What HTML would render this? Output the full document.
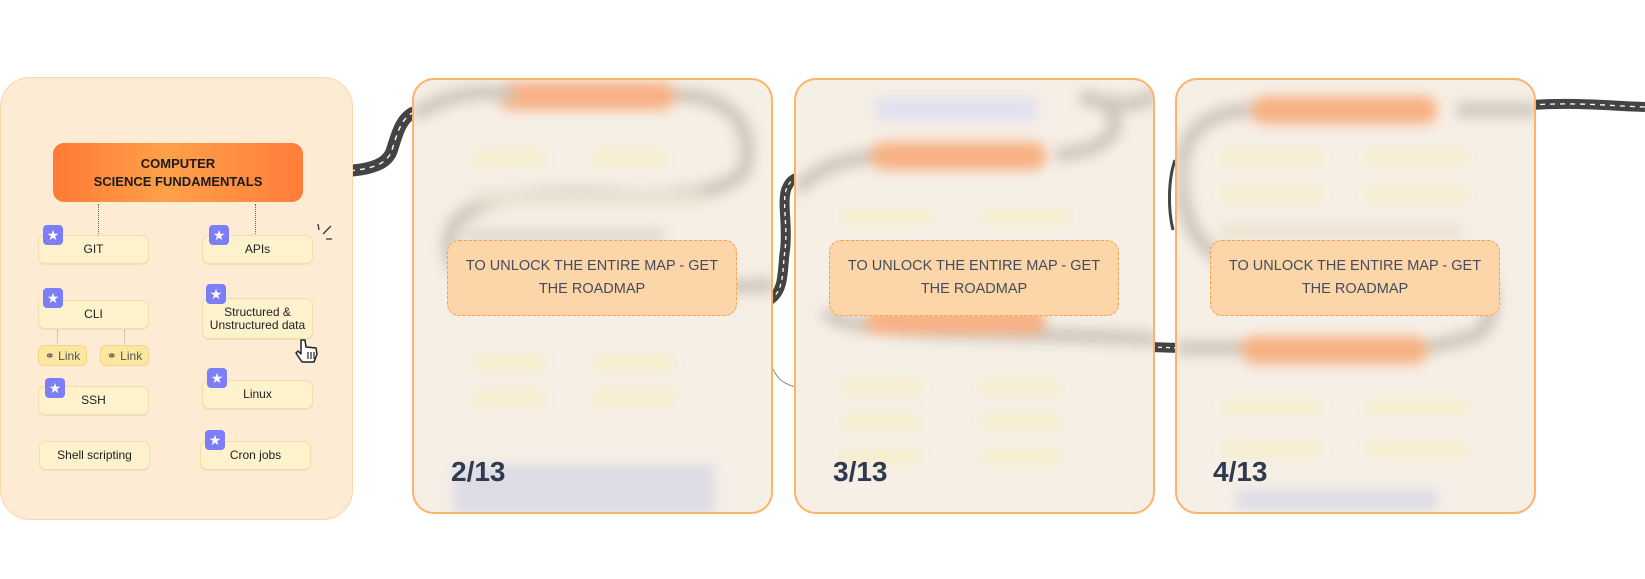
<!DOCTYPE html>
<html><head><meta charset="utf-8"><style>
*{margin:0;padding:0;box-sizing:border-box}
body{width:1645px;height:579px;background:#fff;position:relative;overflow:hidden;font-family:"Liberation Sans",sans-serif}
.abs{position:absolute}
.p1{left:0;top:77px;width:353px;height:443px;background:#fdebd4;border:1.5px solid #fbd6a8;border-radius:30px}
.main{left:53px;top:143px;width:250px;height:59px;border-radius:11px;background:linear-gradient(90deg,#ff7a35,#ffa04a 45%,#ff7d3a);display:flex;align-items:center;justify-content:center;text-align:center;font-weight:bold;font-size:13px;line-height:18px;color:#1b1b1b}
.n{background:#fef2cc;border:1px solid #f1deab;border-radius:7px;display:flex;align-items:center;justify-content:center;text-align:center;font-size:12px;color:#222;line-height:13px;box-shadow:0 1px 1px rgba(0,0,0,.06)}
.st{width:20px;height:20px;border-radius:4px;background:#7b7ef5;color:#fff;font-size:14px;line-height:20px;text-align:center}
.lk{background:#fde6a0;border:1px solid #f5d58a;border-radius:6px;font-size:12px;color:#555;display:flex;align-items:center;justify-content:center}
.dash{border-left:1.5px dotted #666;width:0}
.pn{width:361px;height:436px;top:78px;border:2px solid #fbb468;border-radius:22px;background:#f6efe6;overflow:hidden}
.blur{position:absolute;inset:0;filter:blur(6px)}
.cta{width:290px;height:76px;border:1.5px dashed #f7a052;border-radius:12px;background:#fcd5a8;display:flex;align-items:center;justify-content:center;text-align:center;font-size:14.5px;line-height:23px;color:#454c5c;padding:0 10px}
.num{font-size:28px;font-weight:bold;color:#2f3a4e}
</style></head><body>
<svg class="abs" style="left:0;top:0" width="1645" height="579">
<g fill="none" stroke-linecap="butt">
<path d="M300 172 C350 172 385 172 392 150 C398 130 402 118 414 112" stroke="#444" stroke-width="12"/>
<path d="M300 172 C350 172 385 172 392 150 C398 130 402 118 414 112" stroke="#fff" stroke-width="1.4" stroke-dasharray="5 5"/>
<path d="M770 300 C785 290 782 270 785 250 C788 225 782 205 786 190 C789 182 792 180 796 178" stroke="#444" stroke-width="10"/>
<path d="M770 300 C785 290 782 270 785 250 C788 225 782 205 786 190 C789 182 792 180 796 178" stroke="#fff" stroke-width="1.3" stroke-dasharray="4 4"/>
<path d="M1150 347 L1180 348" stroke="#444" stroke-width="10"/>
<path d="M1150 347 L1180 348" stroke="#fff" stroke-width="1.3" stroke-dasharray="4 4"/>
<path d="M1530 105 C1580 102 1610 106 1645 107" stroke="#444" stroke-width="10"/>
<path d="M1530 105 C1580 102 1610 106 1645 107" stroke="#fff" stroke-width="1.3" stroke-dasharray="5 5"/>
<path d="M1175 160 C1168 180 1168 210 1173 230" stroke="#444" stroke-width="3"/>
<path d="M770 360 C775 380 785 385 800 388" stroke="#888" stroke-width="1"/>
<path d="M94 228 l4 5 l4 -5 M251 228 l4 5 l4 -5" stroke="#555" stroke-width="1"/>
</g></svg>

<div class="abs p1"></div>
<div class="abs main">COMPUTER<br>SCIENCE FUNDAMENTALS</div>
<div class="abs dash" style="left:98px;top:204px;height:30px"></div>
<div class="abs dash" style="left:255px;top:204px;height:30px"></div>
<div class="abs n" style="left:38px;top:235px;width:111px;height:29px">GIT</div>
<div class="abs st" style="left:43px;top:225px">★</div>
<div class="abs n" style="left:202px;top:235px;width:111px;height:29px">APIs</div>
<div class="abs st" style="left:209px;top:225px">★</div>
<div class="abs n" style="left:38px;top:300px;width:111px;height:29px">CLI</div>
<div class="abs st" style="left:43px;top:288px">★</div>
<div class="abs dash" style="left:57px;top:330px;height:14px;border-color:#aaa"></div>
<div class="abs dash" style="left:124px;top:330px;height:14px;border-color:#aaa"></div>
<div class="abs lk" style="left:38px;top:345px;width:49px;height:21px">⚭ Link</div>
<div class="abs lk" style="left:100px;top:345px;width:49px;height:21px">⚭ Link</div>
<div class="abs n" style="left:202px;top:298px;width:111px;height:41px">Structured &amp;<br>Unstructured data</div>
<div class="abs st" style="left:206px;top:284px">★</div>
<div class="abs n" style="left:38px;top:386px;width:111px;height:29px">SSH</div>
<div class="abs st" style="left:45px;top:378px">★</div>
<div class="abs n" style="left:202px;top:380px;width:111px;height:29px">Linux</div>
<div class="abs st" style="left:207px;top:368px">★</div>
<div class="abs n" style="left:39px;top:441px;width:111px;height:29px">Shell scripting</div>
<div class="abs n" style="left:200px;top:441px;width:111px;height:29px">Cron jobs</div>
<div class="abs st" style="left:205px;top:430px">★</div>
<svg class="abs" style="left:292px;top:336px" width="30" height="32"><path d="M9 4 L9 18 L6 15 L4 17 L10 26 L22 26 L25 18 L24 12 L14 11 L13 4 Z" fill="#fff" stroke="#222" stroke-width="1.5" stroke-linejoin="round"/><path d="M16 16 V23 M19 16 V23 M22 16 V23" stroke="#222" stroke-width="1.2"/></svg>
<svg class="abs" style="left:315px;top:222px" width="30" height="30"><path d="M3 2 L4 8 M8 12 L16 4 M11 17 L17 17" stroke="#333" stroke-width="1.3"/></svg>

<div class="abs pn" style="left:412px">
 <div class="blur">
  <div class="abs" style="left:85px;top:2px;width:175px;height:28px;border-radius:12px;background:#f7b183"></div>
  <svg class="abs" style="left:0;top:0" width="361" height="436"><path d="M-10 40 C40 10 70 10 100 15 M260 15 C330 15 340 60 330 90 C320 110 260 120 200 115 C100 110 30 120 35 170 C40 220 130 215 360 205" fill="none" stroke="#cfc5bb" stroke-width="14"/></svg>
  <div class="abs" style="left:60px;top:70px;width:70px;height:16px;background:#f7eec9"></div>
  <div class="abs" style="left:180px;top:70px;width:70px;height:16px;background:#f7eec9"></div>
  <div class="abs" style="left:60px;top:110px;width:230px;height:16px;background:#e9e1d3"></div>
  <div class="abs" style="left:50px;top:150px;width:200px;height:10px;background:#d8d2c8"></div>
  <div class="abs" style="left:60px;top:275px;width:70px;height:16px;background:#f7eec9"></div>
  <div class="abs" style="left:180px;top:275px;width:80px;height:16px;background:#f7eec9"></div>
  <div class="abs" style="left:60px;top:310px;width:70px;height:16px;background:#f7eec9"></div>
  <div class="abs" style="left:180px;top:310px;width:80px;height:16px;background:#f7eec9"></div>
  <div class="abs" style="left:40px;top:385px;width:260px;height:50px;background:#dcdbe6"></div>
 </div>
</div>
<div class="abs cta" style="left:447px;top:240px">TO UNLOCK THE ENTIRE MAP - GET THE ROADMAP</div>
<div class="abs num" style="left:451px;top:456px">2/13</div>

<div class="abs pn" style="left:794px">
 <div class="blur">
  <div class="abs" style="left:80px;top:18px;width:160px;height:22px;background:#dfdff0"></div>
  <svg class="abs" style="left:0;top:0" width="361" height="436"><path d="M0 110 C30 80 60 80 80 75 M260 75 C330 70 330 30 300 20 C260 10 350 40 360 10 M360 260 C250 250 40 260 30 230" fill="none" stroke="#cfc5bb" stroke-width="14"/></svg>
  <div class="abs" style="left:75px;top:62px;width:175px;height:28px;border-radius:12px;background:#f7b183"></div>
  <div class="abs" style="left:45px;top:130px;width:90px;height:14px;background:#f7eec9"></div>
  <div class="abs" style="left:185px;top:130px;width:90px;height:14px;background:#f7eec9"></div>
  <div class="abs" style="left:70px;top:228px;width:180px;height:26px;border-radius:12px;background:#f7b183"></div>
  <div class="abs" style="left:45px;top:300px;width:80px;height:14px;background:#f7eec9"></div>
  <div class="abs" style="left:185px;top:300px;width:80px;height:14px;background:#f7eec9"></div>
  <div class="abs" style="left:45px;top:335px;width:80px;height:14px;background:#f7eec9"></div>
  <div class="abs" style="left:185px;top:335px;width:80px;height:14px;background:#f7eec9"></div>
  <div class="abs" style="left:45px;top:370px;width:80px;height:14px;background:#f7eec9"></div>
  <div class="abs" style="left:185px;top:370px;width:80px;height:14px;background:#f7eec9"></div>
 </div>
</div>
<div class="abs cta" style="left:829px;top:240px">TO UNLOCK THE ENTIRE MAP - GET THE ROADMAP</div>
<div class="abs num" style="left:833px;top:456px">3/13</div>

<div class="abs pn" style="left:1175px">
 <div class="blur">
  <svg class="abs" style="left:0;top:0" width="361" height="436"><path d="M80 30 C20 30 0 60 5 110 C10 160 40 180 60 185 M280 30 L361 30 M300 190 C320 200 320 240 300 255 L250 268 M0 268 L80 268" fill="none" stroke="#cfc5bb" stroke-width="14"/></svg>
  <div class="abs" style="left:75px;top:16px;width:185px;height:28px;border-radius:12px;background:#f7b183"></div>
  <div class="abs" style="left:45px;top:70px;width:100px;height:14px;background:#f7eec9"></div>
  <div class="abs" style="left:190px;top:70px;width:100px;height:14px;background:#f7eec9"></div>
  <div class="abs" style="left:45px;top:108px;width:100px;height:14px;background:#f7eec9"></div>
  <div class="abs" style="left:190px;top:108px;width:100px;height:14px;background:#f7eec9"></div>
  <div class="abs" style="left:45px;top:145px;width:240px;height:14px;background:#ece1cc"></div>
  <div class="abs" style="left:65px;top:256px;width:185px;height:28px;border-radius:12px;background:#f7b183"></div>
  <div class="abs" style="left:45px;top:320px;width:100px;height:14px;background:#f7eec9"></div>
  <div class="abs" style="left:190px;top:320px;width:100px;height:14px;background:#f7eec9"></div>
  <div class="abs" style="left:45px;top:362px;width:100px;height:14px;background:#f7eec9"></div>
  <div class="abs" style="left:190px;top:362px;width:100px;height:14px;background:#f7eec9"></div>
  <div class="abs" style="left:60px;top:410px;width:200px;height:20px;background:#dcdbe6"></div>
 </div>
</div>
<div class="abs cta" style="left:1210px;top:240px">TO UNLOCK THE ENTIRE MAP - GET THE ROADMAP</div>
<div class="abs num" style="left:1213px;top:456px">4/13</div>
</body></html>
